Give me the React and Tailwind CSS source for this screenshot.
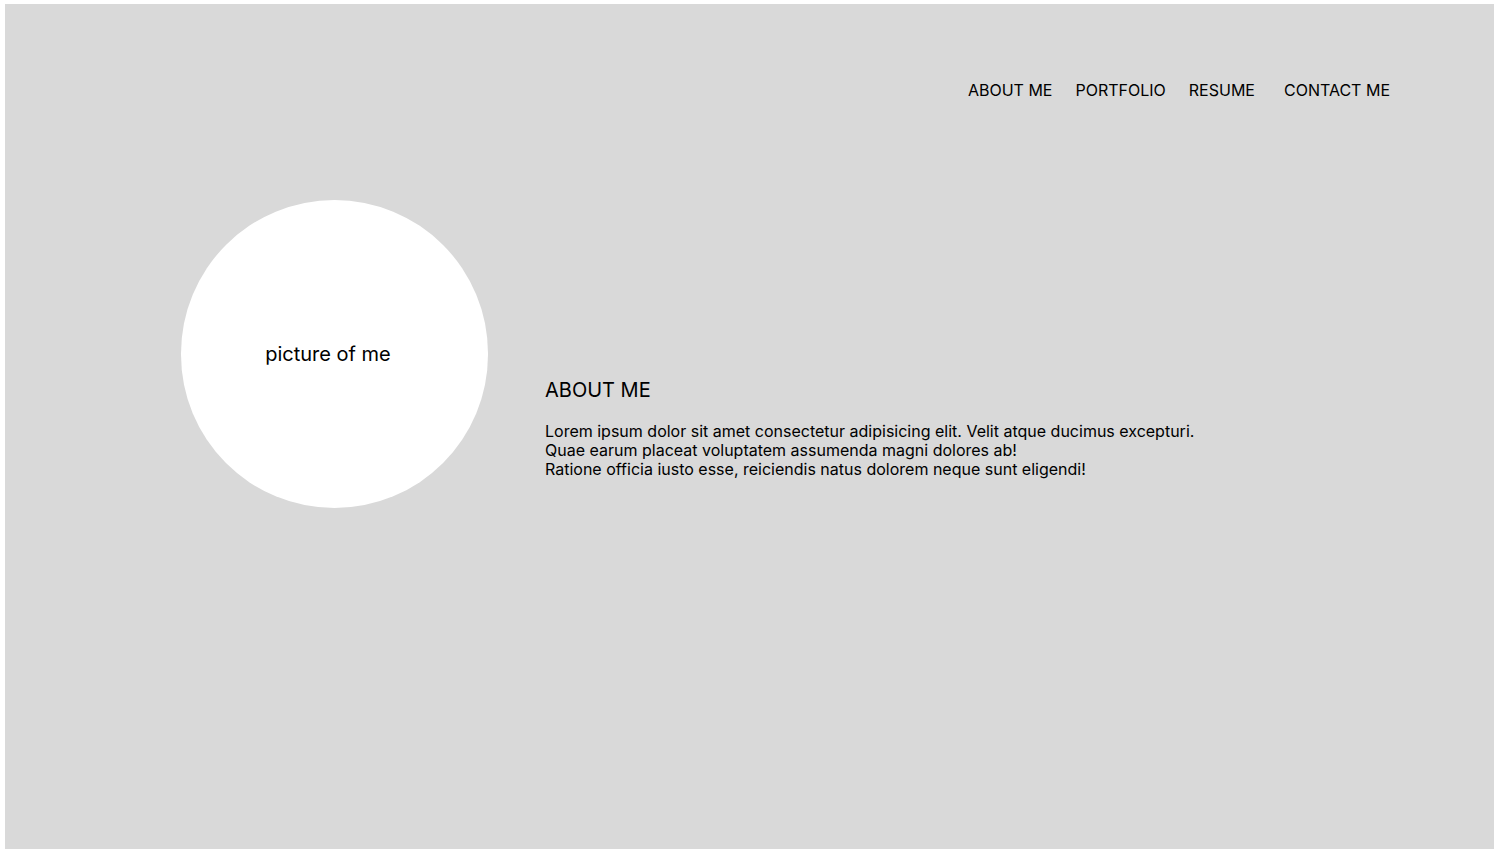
export default function App() {
  return (
    <div className="w-[1494px] h-[854px] bg-white overflow-hidden" style={{ fontFamily: "Inter, 'Noto Sans', sans-serif" }}>
      <div className="ml-[5px] mt-[4px] w-[1489px] h-[845px] bg-[#d9d9d9] text-black">
        <nav className="flex justify-end pt-[74px] pr-[104px] text-[16px] leading-[24px]">
          <a>ABOUT ME</a>
          <a className="ml-[23px]">PORTFOLIO</a>
          <a className="ml-[23px]">RESUME</a>
          <a className="ml-[29px]">CONTACT ME</a>
        </nav>
        <section className="flex items-start mt-[98px]">
          <div className="ml-[176px] w-[307px] h-[308px] rounded-full bg-white flex items-center justify-center shrink-0">
            <span className="text-[20px] leading-[28px] pr-[13px]">picture of me</span>
          </div>
          <div className="ml-[57px] mt-[176px]">
            <h2 className="text-[20px] leading-[28px]">ABOUT ME</h2>
            <p className="mt-[18px] text-[16px] leading-[19px]">
              Lorem ipsum dolor sit amet consectetur adipisicing elit. Velit atque ducimus excepturi.
              <br />
              Quae earum placeat voluptatem assumenda magni dolores ab!
              <br />
              Ratione officia iusto esse, reiciendis natus dolorem neque sunt eligendi!
            </p>
          </div>
        </section>
      </div>
    </div>
  );
}
